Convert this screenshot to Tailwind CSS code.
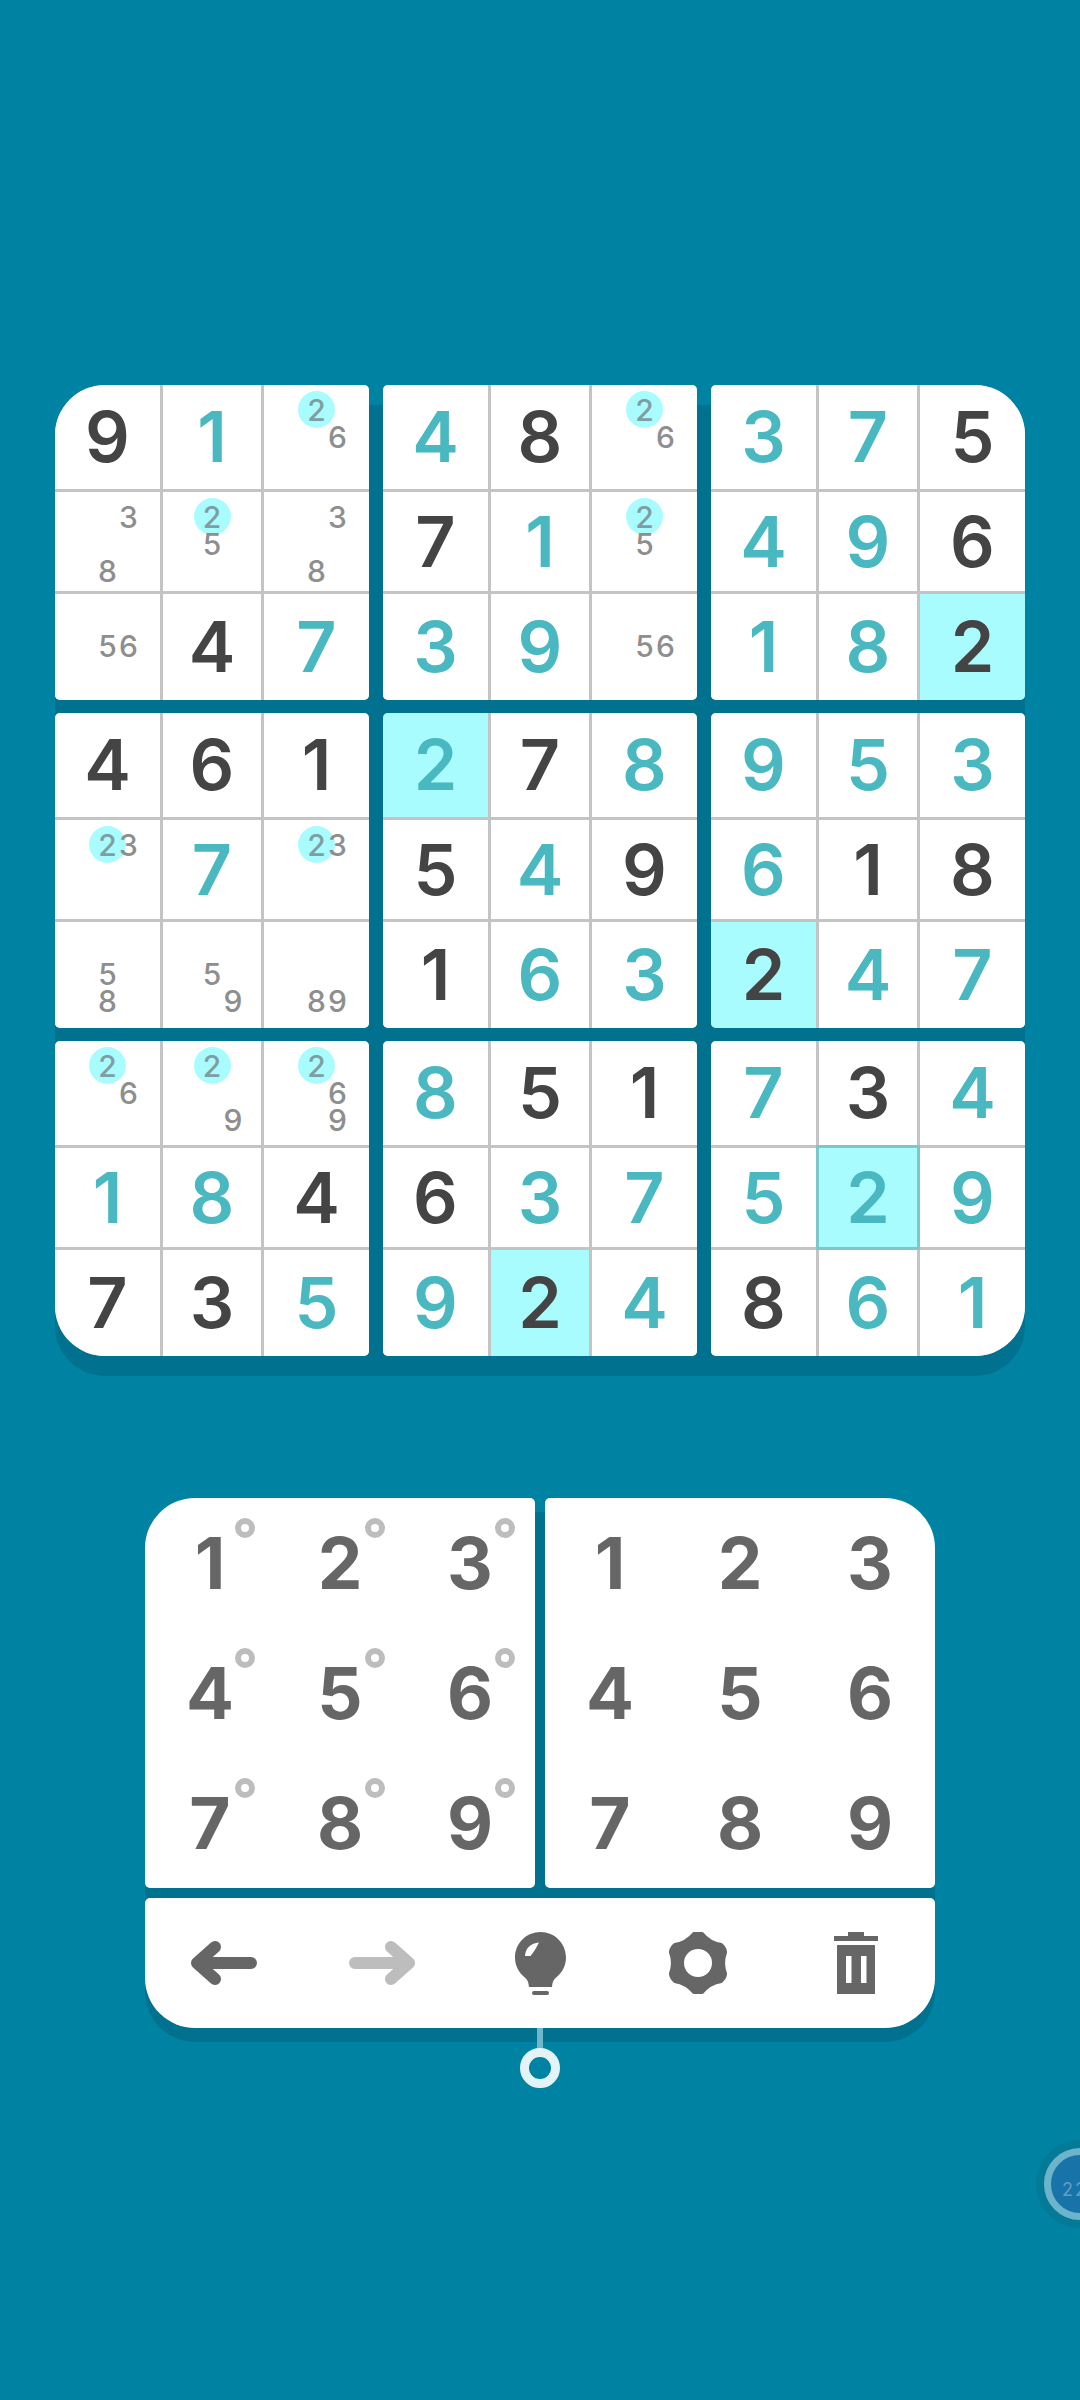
<!DOCTYPE html>
<html lang="en">
<head>
<meta charset="utf-8">
<title>Sudoku</title>
<script src="https://cdn.jsdelivr.net/npm/@tailwindcss/browser@4"></script>
</head>
<body class="relative w-[1080px] h-[2400px] overflow-hidden bg-[#0083a3] font-[Inter,sans-serif] text-[#444444]">
<main class="pt-[385px]">

<!-- Board -->
<section class="relative w-[970px] ml-[55px] grid grid-cols-3 gap-x-[14px] gap-y-[13px] text-[70px] font-semibold leading-none
 [&>div]:relative [&>div]:grid [&>div]:grid-cols-[105px_98px_105px] [&>div]:grid-rows-[104px_99px_106px] [&>div]:gap-[3px] [&>div]:bg-[#c4c4c4] [&>div]:overflow-hidden
 [&>div>div]:flex [&>div>div]:items-center [&>div>div]:justify-center [&>div>div]:bg-white
 [&_u]:no-underline [&_u]:text-[#4ab8c0]
 [&_ul]:self-start [&_ul]:mt-[11px] [&_ul]:grid [&_ul]:grid-cols-[repeat(3,21px)] [&_ul]:grid-rows-[repeat(3,27px)] [&_ul]:text-[30px] [&_ul]:font-medium [&_ul]:text-[#8e8e8e]
 [&_li]:relative [&_li]:flex [&_li]:items-center [&_li]:justify-center [&_li]:list-none">
  <span class="absolute left-0 right-0 top-[20px] -bottom-[20px] rounded-[50px] bg-[#00728f]"></span>

  <!-- Box 1 -->
  <div class="rounded-[5px] rounded-tl-[50px]">
    <div>9</div><div><u>1</u></div>
    <div><ul><li class="col-start-2 row-start-1"><i class="absolute size-[37px] rounded-full bg-[#a9fcfe]"></i><b class="relative font-medium text-[#7f9ea3]">2</b></li><li class="col-start-3 row-start-2">6</li></ul></div>
    <div><ul><li class="col-start-3 row-start-1">3</li><li class="col-start-2 row-start-3">8</li></ul></div>
    <div><ul><li class="col-start-2 row-start-1"><i class="absolute size-[37px] rounded-full bg-[#a9fcfe]"></i><b class="relative font-medium text-[#7f9ea3]">2</b></li><li class="col-start-2 row-start-2">5</li></ul></div>
    <div><ul><li class="col-start-3 row-start-1">3</li><li class="col-start-2 row-start-3">8</li></ul></div>
    <div><ul><li class="col-start-2 row-start-2">5</li><li class="col-start-3 row-start-2">6</li></ul></div>
    <div>4</div><div><u>7</u></div>
  </div>

  <!-- Box 2 -->
  <div class="rounded-[5px]">
    <div><u>4</u></div><div>8</div>
    <div><ul><li class="col-start-2 row-start-1"><i class="absolute size-[37px] rounded-full bg-[#a9fcfe]"></i><b class="relative font-medium text-[#7f9ea3]">2</b></li><li class="col-start-3 row-start-2">6</li></ul></div>
    <div>7</div><div><u>1</u></div>
    <div><ul><li class="col-start-2 row-start-1"><i class="absolute size-[37px] rounded-full bg-[#a9fcfe]"></i><b class="relative font-medium text-[#7f9ea3]">2</b></li><li class="col-start-2 row-start-2">5</li></ul></div>
    <div><u>3</u></div><div><u>9</u></div>
    <div><ul><li class="col-start-2 row-start-2">5</li><li class="col-start-3 row-start-2">6</li></ul></div>
  </div>

  <!-- Box 3 -->
  <div class="rounded-[5px] rounded-tr-[50px]">
    <div><u>3</u></div><div><u>7</u></div><div>5</div>
    <div><u>4</u></div><div><u>9</u></div><div>6</div>
    <div><u>1</u></div><div><u>8</u></div><div class="!bg-[#a9fcfe]">2</div>
  </div>

  <!-- Box 4 -->
  <div class="rounded-[5px]">
    <div>4</div><div>6</div><div>1</div>
    <div><ul><li class="col-start-2 row-start-1"><i class="absolute size-[37px] rounded-full bg-[#a9fcfe]"></i><b class="relative font-medium text-[#7f9ea3]">2</b></li><li class="col-start-3 row-start-1">3</li></ul></div>
    <div><u>7</u></div>
    <div><ul><li class="col-start-2 row-start-1"><i class="absolute size-[37px] rounded-full bg-[#a9fcfe]"></i><b class="relative font-medium text-[#7f9ea3]">2</b></li><li class="col-start-3 row-start-1">3</li></ul></div>
    <div><ul><li class="col-start-2 row-start-2">5</li><li class="col-start-2 row-start-3">8</li></ul></div>
    <div><ul><li class="col-start-2 row-start-2">5</li><li class="col-start-3 row-start-3">9</li></ul></div>
    <div><ul><li class="col-start-2 row-start-3">8</li><li class="col-start-3 row-start-3">9</li></ul></div>
  </div>

  <!-- Box 5 -->
  <div class="rounded-[5px]">
    <div class="!bg-[#a9fcfe]"><u>2</u></div><div>7</div><div><u>8</u></div>
    <div>5</div><div><u>4</u></div><div>9</div>
    <div>1</div><div><u>6</u></div><div><u>3</u></div>
  </div>

  <!-- Box 6 -->
  <div class="rounded-[5px]">
    <div><u>9</u></div><div><u>5</u></div><div><u>3</u></div>
    <div><u>6</u></div><div>1</div><div>8</div>
    <div class="!bg-[#a9fcfe]">2</div><div><u>4</u></div><div><u>7</u></div>
  </div>

  <!-- Box 7 -->
  <div class="rounded-[5px] rounded-bl-[50px]">
    <div><ul><li class="col-start-2 row-start-1"><i class="absolute size-[37px] rounded-full bg-[#a9fcfe]"></i><b class="relative font-medium text-[#7f9ea3]">2</b></li><li class="col-start-3 row-start-2">6</li></ul></div>
    <div><ul><li class="col-start-2 row-start-1"><i class="absolute size-[37px] rounded-full bg-[#a9fcfe]"></i><b class="relative font-medium text-[#7f9ea3]">2</b></li><li class="col-start-3 row-start-3">9</li></ul></div>
    <div><ul><li class="col-start-2 row-start-1"><i class="absolute size-[37px] rounded-full bg-[#a9fcfe]"></i><b class="relative font-medium text-[#7f9ea3]">2</b></li><li class="col-start-3 row-start-2">6</li><li class="col-start-3 row-start-3">9</li></ul></div>
    <div><u>1</u></div><div><u>8</u></div><div>4</div>
    <div>7</div><div>3</div><div><u>5</u></div>
  </div>

  <!-- Box 8 -->
  <div class="rounded-[5px]">
    <div><u>8</u></div><div>5</div><div>1</div>
    <div>6</div><div><u>3</u></div><div><u>7</u></div>
    <div><u>9</u></div><div class="!bg-[#a9fcfe]">2</div><div><u>4</u></div>
  </div>

  <!-- Box 9 -->
  <div class="rounded-[5px] rounded-br-[50px]">
    <div><u>7</u></div><div>3</div><div><u>4</u></div>
    <div><u>5</u></div><div class="!bg-[#a9fcfe] outline-[3px] outline-[#7cc6cd] z-10"><u>2</u></div><div><u>9</u></div>
    <div>8</div><div><u>6</u></div><div><u>1</u></div>
  </div>
</section>

<!-- Controls -->
<section class="relative w-[790px] ml-[145px] mt-[142px] flex flex-col gap-[10px]">
  <span class="absolute left-0 right-0 top-[14px] -bottom-[14px] rounded-[50px] bg-[#00728f]"></span>

  <div class="relative flex gap-[10px] text-[71px] font-bold leading-none text-[#666666]">
    <div class="grid grid-cols-3 grid-rows-3 w-[390px] h-[390px] bg-white rounded-[5px] rounded-tl-[50px] [&>div]:relative [&>div]:flex [&>div]:items-center [&>div]:justify-center [&_i]:absolute [&_i]:left-[90px] [&_i]:top-[20px] [&_i]:size-[20px] [&_i]:rounded-full [&_i]:border-[6px] [&_i]:border-[#bdbdbd]">
      <div>1<i></i></div><div>2<i></i></div><div>3<i></i></div>
      <div>4<i></i></div><div>5<i></i></div><div>6<i></i></div>
      <div>7<i></i></div><div>8<i></i></div><div>9<i></i></div>
    </div>
    <div class="grid grid-cols-3 grid-rows-3 w-[390px] h-[390px] bg-white rounded-[5px] rounded-tr-[50px] [&>div]:flex [&>div]:items-center [&>div]:justify-center">
      <div>1</div><div>2</div><div>3</div>
      <div>4</div><div>5</div><div>6</div>
      <div>7</div><div>8</div><div>9</div>
    </div>
  </div>

  <div class="relative grid grid-cols-5 h-[130px] bg-white rounded-[5px] rounded-bl-[50px] rounded-br-[50px] [&>div]:flex [&>div]:items-center [&>div]:justify-center">
    <div>
      <svg width="66" height="44" viewBox="0 0 66 44" fill="none" stroke="#666666" stroke-width="12" stroke-linecap="round" stroke-linejoin="round"><path d="M60 22H6M24 6L6 22L24 38"/></svg>
    </div>
    <div>
      <svg width="66" height="44" viewBox="0 0 66 44" fill="none" stroke="#bdbdbd" stroke-width="12" stroke-linecap="round" stroke-linejoin="round"><path d="M6 22H60M42 6L60 22L42 38"/></svg>
    </div>
    <div>
      <svg width="51" height="63" viewBox="0 0 51 63"><path fill="#666666" d="M25.5 0C39.6 0 51 11.4 51 25.5C51 33.5 47.3 40.5 41.5 45.2C38.8 47.4 37.5 49.5 37 55H14C13.5 49.5 12.2 47.4 9.5 45.2C3.7 40.5 0 33.5 0 25.5C0 11.4 11.4 0 25.5 0Z"/><rect fill="#666666" x="17" y="59" width="17" height="4" rx="2"/><path fill="#ffffff" d="M10 24C10.5 16 16 11 24 10.500C22 14 20.500 18 15.500 24Z"/></svg>
    </div>
    <div>
      <svg width="58" height="62" viewBox="0 0 58 62"><path fill="#666666" fill-rule="evenodd" d="M23.62 .47Q29 -2 34.38 .47Q41.5 9.35 52.75 11.07Q57.58 14.5 58.13 20.4Q54 31 58.13 41.6Q57.58 47.5 52.75 50.93Q41.5 52.65 34.38 61.53Q29 64 23.62 61.53Q16.5 52.65 5.25 50.93Q.42 47.5 -.13 41.6Q4 31 -.13 20.4Q.42 14.5 5.25 11.07Q16.5 9.35 23.62 .47ZM43 31A14 14 0 1 0 15 31A14 14 0 1 0 43 31Z"/></svg>
    </div>
    <div>
      <svg width="44" height="62" viewBox="0 0 44 62"><path fill="#666666" fill-rule="evenodd" d="M14 0H30V4H44V9H0V4H14ZM3 13H41V62H3ZM12 24V51H17.500V24ZM27 24V51H32.500V24Z"/></svg>
    </div>
  </div>
</section>
</main>

<!-- Hint marker under the toolbar -->
<span class="absolute left-[537px] top-[2028px] w-[6px] h-[24px] bg-[#6fb7cb]"></span>
<span class="absolute left-[520px] top-[2048px] size-[40px] rounded-full border-[9px] border-[#e4f3f6]"></span>

<!-- Floating timer at the right edge -->
<div class="absolute left-[1036px] top-[2140px] size-[88px] rounded-full bg-[#047a96] flex items-center justify-center">
  <div class="relative size-[72px] shrink-0 rounded-full border-[7px] border-[#6cb4cc] bg-[#1873a8] text-[18px] leading-none tracking-[2px] text-[#5f9fc6]">
    <span class="absolute left-[11px] top-[26px]">22</span>
  </div>
</div>
</body>
</html>
